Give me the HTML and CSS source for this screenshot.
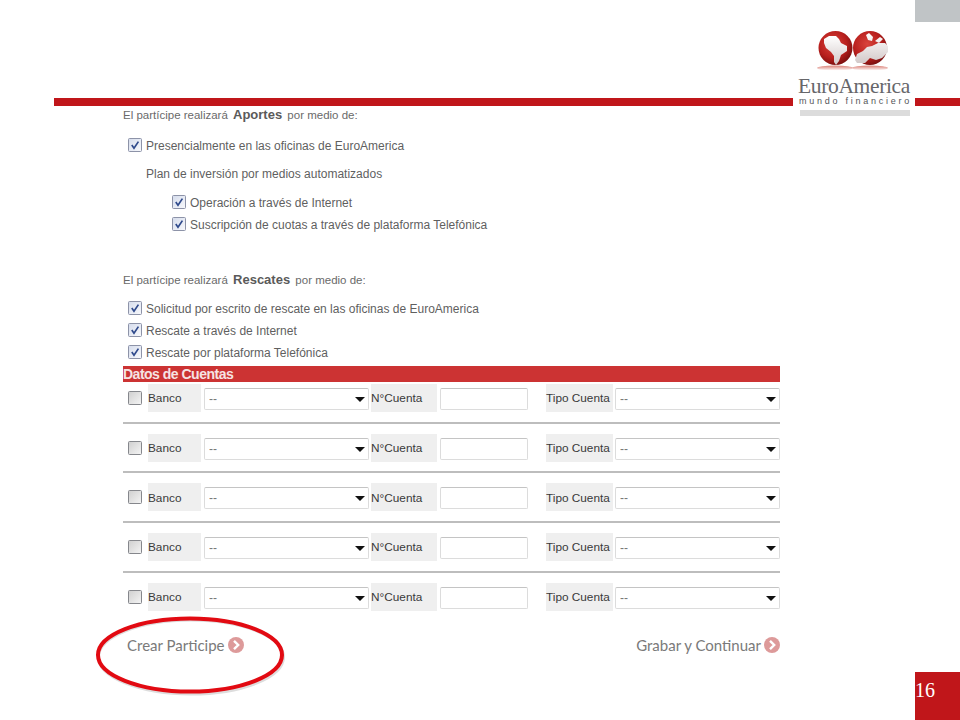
FILE: index.html
```html
<!DOCTYPE html>
<html lang="es">
<head>
<meta charset="utf-8">
<title>EuroAmerica</title>
<link rel="stylesheet" href="styles.css">
</head>
<body>
<svg class="defs" width="0" height="0" aria-hidden="true">
  <defs>
    <linearGradient id="boxOn" x1="0" y1="0" x2="1" y2="1"><stop offset="0" stop-color="#d5dcec"/><stop offset="1" stop-color="#f8f9fc"/></linearGradient>
    <linearGradient id="boxOff" x1="0" y1="0" x2="1" y2="1"><stop offset="0" stop-color="#cfcfcf"/><stop offset="1" stop-color="#f5f5f5"/></linearGradient>
    <radialGradient id="globe" cx="0.42" cy="0.38" r="0.68"><stop offset="0" stop-color="#d9443c"/><stop offset="0.6" stop-color="#b81f1d"/><stop offset="1" stop-color="#6f0d0d"/></radialGradient>
    <linearGradient id="shine" x1="0" y1="0" x2="0" y2="1"><stop offset="0" stop-color="#ffffff"/><stop offset="1" stop-color="#d3c9c9"/></linearGradient>
    <linearGradient id="reflect" x1="0" y1="0" x2="0" y2="1"><stop offset="0" stop-color="#d9796f"/><stop offset="1" stop-color="#ffffff"/></linearGradient>
    <symbol id="chk" viewBox="0 0 14 14">
      <rect x="0.5" y="0.5" width="13" height="13" rx="1" fill="url(#boxOn)" stroke="#8d93a8"/>
      <path d="M3.8 7 L6 10.2 L10.4 3.6" fill="none" stroke="#2f4a8c" stroke-width="1.7"/>
    </symbol>
    <symbol id="unchk" viewBox="0 0 14 14">
      <rect x="0.5" y="0.5" width="13" height="13" rx="1" fill="url(#boxOff)" stroke="#85878c"/>
    </symbol>
    <symbol id="go" viewBox="0 0 16 16">
      <circle cx="8" cy="8" r="8" fill="#dd9a9a"/>
      <path d="M6 3.8 L10.2 8 L6 12.2" fill="none" stroke="#fff" stroke-width="2.4"/>
    </symbol>
  </defs>
</svg>

<div class="slide">
  <div class="corner-top"></div>

  <div class="top-space"></div>
  <div class="rule"></div>

  <div class="logo">
    <svg class="logo-mark" viewBox="0 0 84 48" width="84" height="48" aria-hidden="true">
      <ellipse cx="25" cy="40" rx="18" ry="2.6" fill="url(#reflect)"/>
      <ellipse cx="60" cy="40" rx="18" ry="2.6" fill="url(#reflect)"/>
      <circle cx="25.5" cy="20" r="17" fill="url(#globe)"/>
      <circle cx="60" cy="20" r="17" fill="url(#globe)"/>
      <path d="M14 11 L19 8 L26 8 L29 11 L31 15 L37 18 L37 23 L31 27 L29 33 L26 37 L24 34 L24 28 L21 24 L16 20 L14 15 Z" fill="url(#shine)"/>
      <path d="M56 7 L59 5 L63 9 L62 13 L58 12 Z M65 13 L70 9 L73 11 L69 15 Z M45 32 L47 26 L53 23 L57 19 L62 18 L68 15 L75 15 L78 18 L78 24 L72 30 L66 32 L60 30 L55 35 L47 35 Z" fill="url(#shine)"/>
    </svg>
    <div class="logo-name">EuroAmerica</div>
    <div class="logo-tag">mundo financiero</div>
    <div class="logo-bar"></div>
  </div>

  <main class="content">
    <p class="intro">El partícipe realizará <b>Aportes</b> por medio de:</p>
    <div class="opt opt-first"><svg class="cb"><use href="#chk"/></svg><span>Presencialmente en las oficinas de EuroAmerica</span></div>
    <p class="plan">Plan de inversión por medios automatizados</p>
    <div class="opt sub sub-first"><svg class="cb"><use href="#chk"/></svg><span>Operación a través de Internet</span></div>
    <div class="opt sub"><svg class="cb"><use href="#chk"/></svg><span>Suscripción de cuotas a través de plataforma Telefónica</span></div>

    <p class="intro intro-second">El partícipe realizará <b>Rescates</b> por medio de:</p>
    <div class="opt opt-first-b"><svg class="cb"><use href="#chk"/></svg><span>Solicitud por escrito de rescate en las oficinas de EuroAmerica</span></div>
    <div class="opt"><svg class="cb"><use href="#chk"/></svg><span>Rescate a través de Internet</span></div>
    <div class="opt"><svg class="cb"><use href="#chk"/></svg><span>Rescate por plataforma Telefónica</span></div>

    <h2 class="band">Datos de Cuentas</h2>

    <div class="accounts">
      <div class="acct">
        <svg class="cb cb-row"><use href="#unchk"/></svg>
        <span class="lbl lbl-banco">Banco</span>
        <span class="sel sel-banco"><select><option>--</option></select></span>
        <span class="lbl lbl-num">N°Cuenta</span>
        <input class="num" type="text">
        <span class="lbl lbl-tipo">Tipo Cuenta</span>
        <span class="sel sel-tipo"><select><option>--</option></select></span>
      </div>
      <div class="acct">
        <svg class="cb cb-row"><use href="#unchk"/></svg>
        <span class="lbl lbl-banco">Banco</span>
        <span class="sel sel-banco"><select><option>--</option></select></span>
        <span class="lbl lbl-num">N°Cuenta</span>
        <input class="num" type="text">
        <span class="lbl lbl-tipo">Tipo Cuenta</span>
        <span class="sel sel-tipo"><select><option>--</option></select></span>
      </div>
      <div class="acct">
        <svg class="cb cb-row"><use href="#unchk"/></svg>
        <span class="lbl lbl-banco">Banco</span>
        <span class="sel sel-banco"><select><option>--</option></select></span>
        <span class="lbl lbl-num">N°Cuenta</span>
        <input class="num" type="text">
        <span class="lbl lbl-tipo">Tipo Cuenta</span>
        <span class="sel sel-tipo"><select><option>--</option></select></span>
      </div>
      <div class="acct">
        <svg class="cb cb-row"><use href="#unchk"/></svg>
        <span class="lbl lbl-banco">Banco</span>
        <span class="sel sel-banco"><select><option>--</option></select></span>
        <span class="lbl lbl-num">N°Cuenta</span>
        <input class="num" type="text">
        <span class="lbl lbl-tipo">Tipo Cuenta</span>
        <span class="sel sel-tipo"><select><option>--</option></select></span>
      </div>
      <div class="acct acct-last">
        <svg class="cb cb-row"><use href="#unchk"/></svg>
        <span class="lbl lbl-banco">Banco</span>
        <span class="sel sel-banco"><select><option>--</option></select></span>
        <span class="lbl lbl-num">N°Cuenta</span>
        <input class="num" type="text">
        <span class="lbl lbl-tipo">Tipo Cuenta</span>
        <span class="sel sel-tipo"><select><option>--</option></select></span>
      </div>
    </div>

    <div class="actions">
      <a class="action">Crear Participe <svg class="go"><use href="#go"/></svg></a>
      <a class="action">Grabar y Continuar <svg class="go"><use href="#go"/></svg></a>
    </div>
  </main>

  <svg class="circle" viewBox="0 0 194 84" width="194" height="84" aria-hidden="true">
    <ellipse cx="96" cy="42" rx="92.5" ry="37" fill="none" stroke="#dddddd" stroke-width="3" transform="translate(1 1)"/>
    <ellipse cx="96" cy="41" rx="92" ry="36.5" fill="none" stroke="#e20a12" stroke-width="4"/>
  </svg>

  <div class="page-num">16</div>
</div>
</body>
</html>
```

FILE: styles.css
```css
* { box-sizing: border-box; }

html, body { margin: 0; padding: 0; background: #fff; }

.defs { position: absolute; }

.slide {
  position: relative;
  width: 960px;
  height: 720px;
  overflow: hidden;
  background: #fff;
  font-family: "Liberation Sans", Arial, sans-serif;
  color: #5f5f5f;
}

.corner-top {
  position: absolute;
  top: 0;
  right: 0;
  width: 45px;
  height: 22px;
  background: #c0c4c6;
}

.top-space { height: 98px; }

.rule {
  height: 8px;
  margin-left: 54px;
  background: #c0161a;
}

/* logo sits over the rule */
.logo {
  position: absolute;
  top: 28px;
  left: 793px;
  width: 122px;
  height: 90px;
  background: #fff;
  display: flex;
  flex-direction: column;
  align-items: flex-start;
}

.logo-mark { margin-left: 17px; display: block; flex: none; }

.logo-name {
  margin: 1px 0 0 5px;
  height: 19px;
  font: 21.5px/19px "Liberation Serif", serif;
  letter-spacing: -0.35px;
  color: #66666a;
  white-space: nowrap;
}

.logo-tag {
  margin: 0 0 0 6px;
  font: 9px/10px "Liberation Sans", sans-serif;
  letter-spacing: 2.75px;
  color: #555558;
  white-space: nowrap;
}

.logo-bar {
  margin: 4px 0 0 7px;
  width: 110px;
  height: 6px;
  background: #dcdcdc;
}

.content {
  width: 657px;
  margin-left: 123px;
  font-size: 12px;
}

.intro {
  margin: 0;
  height: 18px;
  line-height: 18px;
  font-size: 11.5px;
  color: #6a6a6a;
}

.intro b { margin: 0 2px; font-size: 13px; color: #5a5a5a; }

.intro-second { margin-top: 34px; height: 22px; line-height: 22px; }

.opt {
  display: flex;
  align-items: center;
  height: 22px;
  padding-left: 5px;
  white-space: nowrap;
}

.opt span { position: relative; top: 1px; }

.opt-first { margin-top: 10px; }
.opt-first-b { margin-top: 6px; }

.sub { padding-left: 49px; }
.sub-first { margin-top: 6px; }

.cb { width: 14px; height: 14px; flex: none; margin-right: 4px; }

.plan {
  margin: 7px 0 0 23px;
  height: 22px;
  line-height: 22px;
}

.band {
  margin: 3px 0 0;
  height: 16px;
  background: #cc3333;
  color: #f6e3e3;
  font-size: 14px;
  letter-spacing: -0.5px;
  line-height: 16px;
  font-weight: bold;
}

.accounts { padding: 2px 0 0; }

.acct {
  display: flex;
  align-items: flex-start;
  height: 39.5px;
  padding-bottom: 9.5px;
  margin-bottom: 10.2px;
  border-bottom: 2px solid #bdbdbd;
  color: #3a3a3a;
}

.acct-last { border-bottom: 0; margin-bottom: 0; }

.cb-row { margin: 7px 6px 0 5px; }

.lbl {
  display: flex;
  align-items: center;
  height: 28px;
  padding-top: 0.6px;
  font-size: 11.8px;
  background: #efefef;
  white-space: nowrap;
}

.lbl-banco { width: 53px; }
.lbl-num { width: 66px; margin-left: 2px; }
.lbl-tipo { width: 67px; margin-left: 18px; }

.sel {
  position: relative;
  display: block;
  width: 165px;
  height: 22px;
  margin-top: 4px;
}

.sel-banco { margin-left: 3px; }
.sel-tipo { margin-left: 2px; }

.sel select {
  display: block;
  width: 100%;
  height: 100%;
  padding: 0 0 0 4px;
  appearance: none;
  -webkit-appearance: none;
  background: #fff;
  border: 1px solid #dcdcdc;
  border-top-color: #c4c4c4;
  border-radius: 2px;
  font: 12px "Liberation Sans", sans-serif;
  color: #777;
}

.sel::after {
  content: "";
  position: absolute;
  top: 9px;
  right: 4px;
  border-left: 5px solid transparent;
  border-right: 5px solid transparent;
  border-top: 5px solid #111;
}

.num {
  display: block;
  width: 88px;
  height: 22px;
  margin: 4px 0 0 3px;
  padding: 0 4px;
  background: #fff;
  border: 1px solid #dcdcdc;
  border-top-color: #c4c4c4;
  border-radius: 2px;
}

.actions {
  display: flex;
  justify-content: space-between;
  margin-top: 13px;
  padding-left: 4px;
}

.action {
  display: flex;
  align-items: center;
  gap: 3px;
  height: 20px;
  font: 15px/20px Lato, sans-serif;
  color: #7a7a7a;
  white-space: nowrap;
}

.go { width: 16px; height: 16px; flex: none; }

.circle {
  position: absolute;
  left: 94px;
  top: 614px;
}

.page-num {
  position: absolute;
  right: 0;
  bottom: 0;
  width: 45px;
  height: 48px;
  background: #c0161a;
  color: #fff;
  font: 20px/36px "Liberation Serif", serif;
}
```
